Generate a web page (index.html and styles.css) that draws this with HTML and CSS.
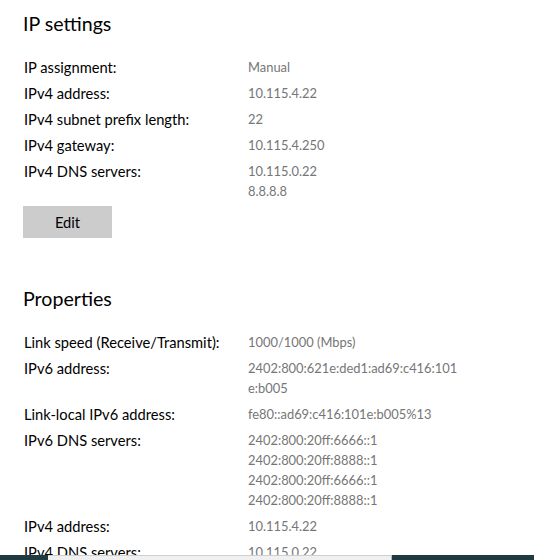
FILE: index.html
```html
<!DOCTYPE html>
<html>
<head>
<meta charset="utf-8">
<link rel="stylesheet" href="styles.css">
</head>
<body>
<main class="page">
  <section class="section">
    <h2 class="heading">IP settings</h2>
    <div class="props">
      <div class="label">IP assignment:</div><div class="value">Manual</div>
      <div class="label">IPv4 address:</div><div class="value">10.115.4.22</div>
      <div class="label">IPv4 subnet prefix length:</div><div class="value">22</div>
      <div class="label">IPv4 gateway:</div><div class="value">10.115.4.250</div>
      <div class="label">IPv4 DNS servers:</div><div class="value">10.115.0.22<br>8.8.8.8</div>
    </div>
    <button class="btn">Edit</button>
  </section>
  <section class="section section-props">
    <h2 class="heading">Properties</h2>
    <div class="props">
      <div class="label">Link speed (Receive/Transmit):</div><div class="value">1000/1000 (Mbps)</div>
      <div class="label">IPv6 address:</div><div class="value">2402:800:621e:ded1:ad69:c416:101<br>e:b005</div>
      <div class="label">Link-local IPv6 address:</div><div class="value">fe80::ad69:c416:101e:b005%13</div>
      <div class="label">IPv6 DNS servers:</div><div class="value">2402:800:20ff:6666::1<br>2402:800:20ff:8888::1<br>2402:800:20ff:6666::1<br>2402:800:20ff:8888::1</div>
      <div class="label">IPv4 address:</div><div class="value">10.115.4.22</div>
      <div class="label">IPv4 DNS servers:</div><div class="value">10.115.0.22</div>
    </div>
  </section>
</main>
<div class="taskbar">
  <div class="tb-dark tb-left"></div>
  <div class="tb-light"></div>
  <div class="tb-dark tb-right"></div>
</div>
</body>
</html>
```
FILE: styles.css
```css
html, body {
  margin: 0;
  padding: 0;
  background: #ffffff;
  overflow: hidden;
}
body {
  font-family: "Lato", "Open Sans", sans-serif;
  color: #000000;
  height: 560px;
}
.page {
  padding: 10px 0 0 23px;
}
.heading {
  margin: 0;
  font-size: 19.6px;
  font-weight: 400;
  line-height: 28px;
}
.props {
  display: grid;
  grid-template-columns: 224px auto;
  align-items: start;
  row-gap: 6px;
  margin-top: 19px;
  margin-left: 1px;
  line-height: 20px;
}
.label {
  color: #000000;
  font-size: 14.7px;
}
.value {
  color: #767676;
  font-size: 12.9px;
}
.btn {
  display: block;
  margin-top: 5px;
  width: 89px;
  height: 32px;
  border: none;
  background: #cccccc;
  font-family: inherit;
  font-size: 14.7px;
  color: #000000;
  padding: 0;
}
.section-props {
  margin-top: 47px;
}
.taskbar {
  position: fixed;
  left: 0;
  right: 0;
  bottom: 0;
  height: 5px;
  display: flex;
}
.tb-dark {
  background: #1f3a40;
}
.tb-left {
  width: 48px;
}
.tb-light {
  width: 344px;
  background: #f0f0f0;
  border-top: 1px solid #cfcfcf;
  border-right: 1px solid #b8b8b8;
  box-sizing: border-box;
}
.tb-right {
  flex: 1;
}
```
